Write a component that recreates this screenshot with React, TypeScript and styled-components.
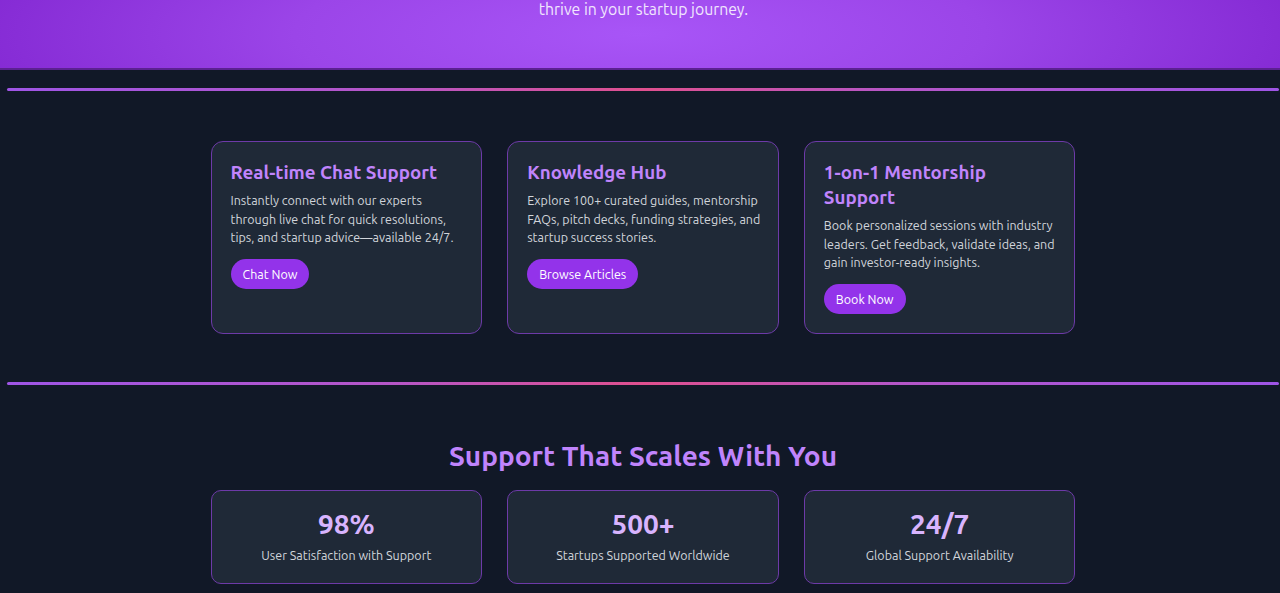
import React from "react";
import styled, { createGlobalStyle } from "styled-components";

const GlobalStyle = createGlobalStyle`
  html, body {
    margin: 0;
    padding: 0;
    background: #111827;
  }
  body {
    font-family: Ubuntu, "Noto Sans", "Open Sans", sans-serif;
    -webkit-font-smoothing: antialiased;
  }
  * { box-sizing: border-box; }
`;

const Page = styled.div`
  background: #111827;
  min-height: 593px;
  overflow: hidden;
`;

const Hero = styled.header`
  background: radial-gradient(ellipse 60% 260% at 50% 50%, #a855f7 0%, #9b45e8 45%, #7e22ce 100%);
  border-bottom: 2px solid #5b2191;
  height: 70px;
  display: flex;
  justify-content: center;
`;

const HeroText = styled.p`
  margin: -3px 0 0 7px;
  font-size: 15.8px;
  line-height: 24px;
  color: #f1e6fd;
`;

const Main = styled.main`
  padding: 18px 0 0 6px;
  display: flex;
  flex-direction: column;
  align-items: center;
`;

const Divider = styled.hr`
  align-self: stretch;
  margin: 0 1px;
  height: 3px;
  border: 0;
  border-radius: 2px;
  background: linear-gradient(90deg, #9f55e6 0%, #b556c8 30%, #e0508f 50%, #b556c8 70%, #9f55e6 100%);
`;

const Grid = styled.section<{ $top: number; $bottom: number }>`
  width: 865px;
  display: grid;
  grid-template-columns: repeat(3, 1fr);
  gap: 25px;
  margin-top: ${(p) => p.$top}px;
  margin-bottom: ${(p) => p.$bottom}px;
`;

const Card = styled.article`
  background: #1f2937;
  border: 1px solid #6d3aa8;
  border-radius: 12px;
  padding: 18px 15px 19px 19px;
  display: flex;
  flex-direction: column;
  align-items: flex-start;
`;

const CardTitle = styled.h3`
  margin: 0;
  font-size: 18.8px;
  line-height: 25px;
  font-weight: 700;
  color: #c084fc;
`;

const CardText = styled.p`
  margin: 6px 0 12px;
  font-size: 12.5px;
  line-height: 18.5px;
  color: #d1d5db;
`;

const Button = styled.button`
  height: 30px;
  padding: 0 12px;
  border: 0;
  border-radius: 999px;
  background: #9333ea;
  color: #ffffff;
  font-family: inherit;
  font-size: 12.5px;
  cursor: pointer;
`;

const Heading = styled.h2`
  margin: 54px 0 0;
  font-size: 28px;
  line-height: 34px;
  font-weight: 700;
  color: #c084fc;
`;

const StatCard = styled.div`
  background: #1f2937;
  border: 1px solid #6d3aa8;
  border-radius: 10px;
  padding: 17px 16px 19px;
  display: flex;
  flex-direction: column;
  align-items: center;
  gap: 6px;
`;

const StatValue = styled.div`
  font-size: 28px;
  line-height: 32px;
  font-weight: 700;
  color: #d8b4fe;
`;

const StatLabel = styled.div`
  font-size: 12.5px;
  line-height: 18px;
  color: #d1d5db;
`;

const services = [
  {
    title: "Real-time Chat Support",
    text: "Instantly connect with our experts through live chat for quick resolutions, tips, and startup advice—available 24/7.",
    cta: "Chat Now",
  },
  {
    title: "Knowledge Hub",
    text: "Explore 100+ curated guides, mentorship FAQs, pitch decks, funding strategies, and startup success stories.",
    cta: "Browse Articles",
  },
  {
    title: "1-on-1 Mentorship Support",
    text: "Book personalized sessions with industry leaders. Get feedback, validate ideas, and gain investor-ready insights.",
    cta: "Book Now",
  },
];

const stats = [
  { value: "98%", label: "User Satisfaction with Support" },
  { value: "500+", label: "Startups Supported Worldwide" },
  { value: "24/7", label: "Global Support Availability" },
];

export default function App() {
  return (
    <Page>
      <GlobalStyle />
      <Hero>
        <HeroText>thrive in your startup journey.</HeroText>
      </Hero>
      <Main>
        <Divider />
        <Grid $top={50} $bottom={48}>
          {services.map((s) => (
            <Card key={s.title}>
              <CardTitle>{s.title}</CardTitle>
              <CardText>{s.text}</CardText>
              <Button>{s.cta}</Button>
            </Card>
          ))}
        </Grid>
        <Divider />
        <Heading>Support That Scales With You</Heading>
        <Grid $top={17} $bottom={40}>
          {stats.map((s) => (
            <StatCard key={s.label}>
              <StatValue>{s.value}</StatValue>
              <StatLabel>{s.label}</StatLabel>
            </StatCard>
          ))}
        </Grid>
      </Main>
    </Page>
  );
}
